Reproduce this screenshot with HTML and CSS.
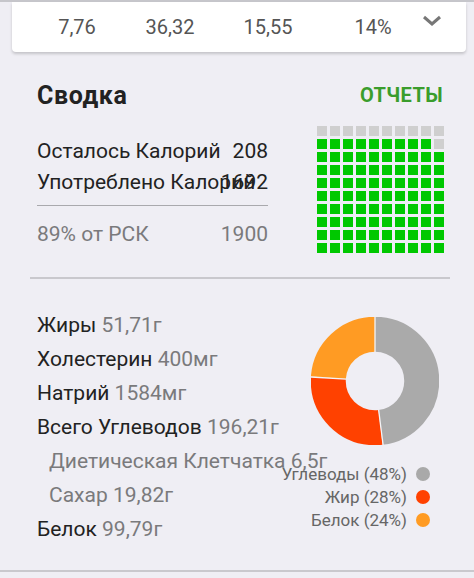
FILE: index.html
```html
<!DOCTYPE html>
<html lang="ru">
<head>
<meta charset="utf-8">
<link rel="stylesheet" href="styles.css">
</head>
<body>
<div class="page">
  <div class="card">
    <span class="num">7,76</span>
    <span class="num">36,32</span>
    <span class="num">15,55</span>
    <span class="num">14%</span>
    <span class="chev"><svg width="20" height="12" viewBox="0 0 20 12"><path d="M2 2 L10 9 L18 2" fill="none" stroke="#777" stroke-width="3"/></svg></span>
  </div>

  <div class="head">
    <h2 class="title">Сводка</h2>
    <span class="reports">ОТЧЕТЫ</span>
  </div>

  <div class="calories">
    <div class="cal-list">
      <div class="row"><span class="lbl">Осталось Калорий</span><span class="val">208</span></div>
      <div class="row"><span class="lbl">Употреблено Калорий</span><span class="val">1692</span></div>
      <div class="rule"></div>
      <div class="row muted"><span class="lbl">89% от РСК</span><span class="val">1900</span></div>
    </div>
    <div class="waffle">
      <i class="off"></i><i class="off"></i><i class="off"></i><i class="off"></i><i class="off"></i><i class="off"></i><i class="off"></i><i class="off"></i><i class="off"></i><i class="off"></i>
      <i></i><i></i><i></i><i></i><i></i><i></i><i></i><i></i><i></i><i class="off"></i>
      <i></i><i></i><i></i><i></i><i></i><i></i><i></i><i></i><i></i><i></i>
      <i></i><i></i><i></i><i></i><i></i><i></i><i></i><i></i><i></i><i></i>
      <i></i><i></i><i></i><i></i><i></i><i></i><i></i><i></i><i></i><i></i>
      <i></i><i></i><i></i><i></i><i></i><i></i><i></i><i></i><i></i><i></i>
      <i></i><i></i><i></i><i></i><i></i><i></i><i></i><i></i><i></i><i></i>
      <i></i><i></i><i></i><i></i><i></i><i></i><i></i><i></i><i></i><i></i>
      <i></i><i></i><i></i><i></i><i></i><i></i><i></i><i></i><i></i><i></i>
      <i></i><i></i><i></i><i></i><i></i><i></i><i></i><i></i><i></i><i></i>
    </div>
  </div>

  <div class="sep"></div>

  <div class="macros">
    <div class="macro-list">
      <div class="m">Жиры <span class="v">51,71г</span></div>
      <div class="m">Холестерин <span class="v">400мг</span></div>
      <div class="m">Натрий <span class="v">1584мг</span></div>
      <div class="m">Всего Углеводов <span class="v">196,21г</span></div>
      <div class="m sub">Диетическая Клетчатка 6,5г</div>
      <div class="m sub">Сахар 19,82г</div>
      <div class="m">Белок <span class="v">99,79г</span></div>
    </div>
    <div class="chart">
      <svg class="donut" width="128" height="128" viewBox="0 0 128 128">
        <g transform="rotate(-90 64 64)" fill="none" stroke-width="35">
          <circle cx="64" cy="64" r="46.75" stroke="#aaaaaa" stroke-dasharray="141 300"/>
          <circle cx="64" cy="64" r="46.75" stroke="#ff4100" stroke-dasharray="82.25 300" stroke-dashoffset="-141"/>
          <circle cx="64" cy="64" r="46.75" stroke="#ff9b23" stroke-dasharray="70.5 300" stroke-dashoffset="-223.25"/>
        </g>
        <g stroke="#f4f4f6" stroke-width="1.3">
          <line x1="64" y1="35" x2="64" y2="-1"/>
          <line x1="67.63" y1="92.77" x2="72.14" y2="128.49"/>
          <line x1="35.06" y1="62.18" x2="-0.87" y2="59.92"/>
        </g>
      </svg>
      <div class="legend">
        <div class="lg">Углеводы (48%)<span class="dot gray"></span></div>
        <div class="lg">Жир (28%)<span class="dot red"></span></div>
        <div class="lg">Белок (24%)<span class="dot orange"></span></div>
      </div>
    </div>
  </div>

  <div class="bottom-line"></div>
</div>
</body>
</html>
```

FILE: styles.css
```css
html, body {
  margin: 0;
  padding: 0;
}
body {
  background: #efeef4;
  font-family: Roboto, "Noto Sans", "Liberation Sans", sans-serif;
  color: #222;
}
.page {
  border-top: 2px solid #c6c6cb;
}
.card {
  margin: 0 8px 0 12px;
  height: 50px;
  background: #fff;
  border-radius: 0 0 4px 4px;
  box-shadow: 0 2px 3px rgba(0, 0, 0, 0.18);
  display: grid;
  grid-template-columns: 106px 80px 116px 94px 24px;
  padding-left: 12px;
  align-items: center;
}
.num {
  text-align: center;
  font-size: 20px;
  color: #555;
}
.chev {
  align-self: start;
  margin-top: 13px;
  display: flex;
  justify-content: center;
}
.chev svg { display: block; }

.head {
  margin-top: 29px;
  padding: 0 31px 0 37px;
  height: 28px;
  display: flex;
  align-items: center;
  justify-content: space-between;
}
.title {
  margin: 0;
  font-size: 25px;
  font-weight: 700;
  letter-spacing: 0.6px;
  color: #222;
}
.reports {
  font-size: 20px;
  font-weight: 700;
  color: #3a9d2c;
  letter-spacing: 0.4px;
}

.calories {
  margin-top: 17px;
  padding: 0 30px 0 37px;
  display: flex;
  justify-content: space-between;
}
.cal-list {
  width: 231px;
  padding-top: 9px;
}
.row {
  display: flex;
  height: 31px;
  align-items: center;
  font-size: 21px;
}
.lbl {
  flex: 1 1 0;
  min-width: 0;
  white-space: nowrap;
}
.val {
  flex: none;
}
.rule {
  margin-top: 8px;
  height: 1px;
  background: #a9a9ad;
  margin-bottom: 12px;
}
.muted { color: #7a7a7c; }

.waffle {
  display: grid;
  grid-template-columns: repeat(10, 10px);
  grid-auto-rows: 10px;
  gap: 3px;
}
.waffle i {
  display: block;
  background: #00c800;
}
.waffle i.off { background: #cfcfcf; }

.sep {
  margin: 24px 24px 0 30px;
  height: 2px;
  background: #c9c8cd;
}

.macros {
  margin-top: 29px;
  padding: 0 34px 0 37px;
  display: flex;
}
.macro-list {
  flex: 1 1 0;
  min-width: 0;
}
.m {
  height: 34px;
  line-height: 34px;
  font-size: 21px;
  white-space: nowrap;
  color: #222;
}
.m .v { color: #7a7a7c; }
.m.sub {
  padding-left: 12px;
  color: #7a7a7c;
}
.chart {
  width: 159px;
  padding-top: 9px;
  display: flex;
  flex-direction: column;
  align-items: flex-end;
}
.donut {
  display: block;
  margin-right: 1px;
}
.legend {
  margin-top: 17px;
}
.lg {
  height: 23px;
  display: flex;
  align-items: center;
  justify-content: flex-end;
  font-size: 17px;
  color: #666;
  white-space: nowrap;
}
.dot {
  width: 14px;
  height: 14px;
  border-radius: 50%;
  margin: 0 10px 0 9px;
}
.dot.gray { background: #a9a9a9; }
.dot.red { background: #ff4100; }
.dot.orange { background: #ff9b23; }

.bottom-line {
  margin-top: 24px;
  height: 2px;
  background: #c9c8cd;
}
```
